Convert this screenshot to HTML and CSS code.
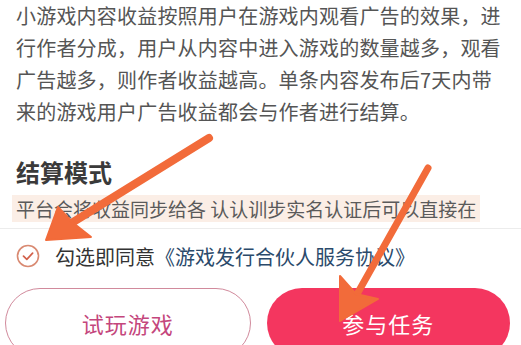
FILE: index.html
```html
<!DOCTYPE html>
<html lang="zh">
<head>
<meta charset="utf-8">
<link rel="stylesheet" href="styles.css">
</head>
<body>
<div class="page">
  <div class="content">
    <p class="desc">小游戏内容收益按照用户在游戏内观看广告的效果，进行作者分成，用户从内容中进入游戏的数量越多，观看广告越多，则作者收益越高。单条内容发布后7天内带来的游戏用户广告收益都会与作者进行结算。</p>
    <h2 class="title">结算模式</h2>
    <p class="note"><span class="note-band">平台会将收益同步给各 认认训步实名认证后可以直接在</span></p>
  </div>
  <div class="divider"></div>
  <div class="agree">
    <span class="check">
      <svg width="24" height="24" viewBox="0 0 24 24"><circle cx="12" cy="12" r="10.5" fill="none" stroke="#d98a72" stroke-width="1.6"/><path d="M7.5 12.2 L10.8 15.3 L16.6 9.2" fill="none" stroke="#d2604a" stroke-width="1.7" stroke-linecap="round" stroke-linejoin="round"/></svg>
    </span>
    <span class="agree-text">勾选即同意</span><span class="agree-link">《游戏发行合伙人服务协议》</span>
  </div>
  <div class="actions">
    <button class="btn btn-ghost">试玩游戏</button>
    <button class="btn btn-primary">参与任务</button>
  </div>
  <svg class="arrows" width="521" height="345" viewBox="0 0 521 345">
    <g fill="#f26b3a" stroke="#f26b3a" stroke-linecap="round" stroke-linejoin="round">
      <line x1="209" y1="138" x2="70" y2="224" stroke-width="8"/>
      <polygon points="46,240 58,207 72,222 91,237" stroke-width="2"/>
      <line x1="428" y1="168" x2="356" y2="296" stroke-width="7"/>
      <polygon points="340,321 340,276 356,294 378,299" stroke-width="2"/>
    </g>
  </svg>
</div>
</body>
</html>
```
FILE: styles.css
```css
* { box-sizing: border-box; }
html, body { margin: 0; padding: 0; background: #fff; }
body {
  font-family: "Noto Sans CJK SC", "Noto Sans", sans-serif;
  overflow: hidden;
}
.page {
  position: relative;
  width: 521px;
  height: 345px;
  overflow: hidden;
}
.content { padding: 0 12px 0 16px; }
.desc {
  margin: 0;
  font-size: 20px;
  line-height: 32px;
  letter-spacing: 0.2px;
  color: #555;
}
.title {
  margin: 28px 0 0;
  font-size: 24px;
  line-height: 32px;
  font-weight: 700;
  color: #3a3a3a;
}
.note {
  margin: 7px 0 0;
  font-size: 19px;
  line-height: 27px;
  color: #5a5a5a;
  white-space: nowrap;
}
.note-band {
  display: inline-block;
  background: #fbeee6;
  margin-left: -4px;
  padding: 0 4px;
  line-height: 27px;
}
.divider {
  margin-top: 6px;
  height: 1px;
  background: #ececec;
}
.agree {
  display: flex;
  align-items: center;
  margin-top: 11px;
  height: 32px;
  padding-left: 16px;
  font-size: 20px;
}
.check { display: flex; margin-right: 15px; }
.agree-text { color: #333; }
.agree-link { color: #2b4a6b; }
.actions {
  display: flex;
  gap: 16px;
  padding: 0 11px 0 5px;
  margin-top: 16px;
}
.btn {
  flex: 1;
  height: 70px;
  border-radius: 35px;
  font-family: inherit;
  font-size: 22px;
  letter-spacing: 1px;
  padding: 0;
}
.btn-ghost {
  background: #fff;
  border: 1.5px solid #d18a9c;
  color: #c4467c;
}
.btn-primary {
  background: #f4365f;
  border: none;
  color: #fff;
}
.arrows {
  position: absolute;
  left: 0;
  top: 0;
  pointer-events: none;
}
```
